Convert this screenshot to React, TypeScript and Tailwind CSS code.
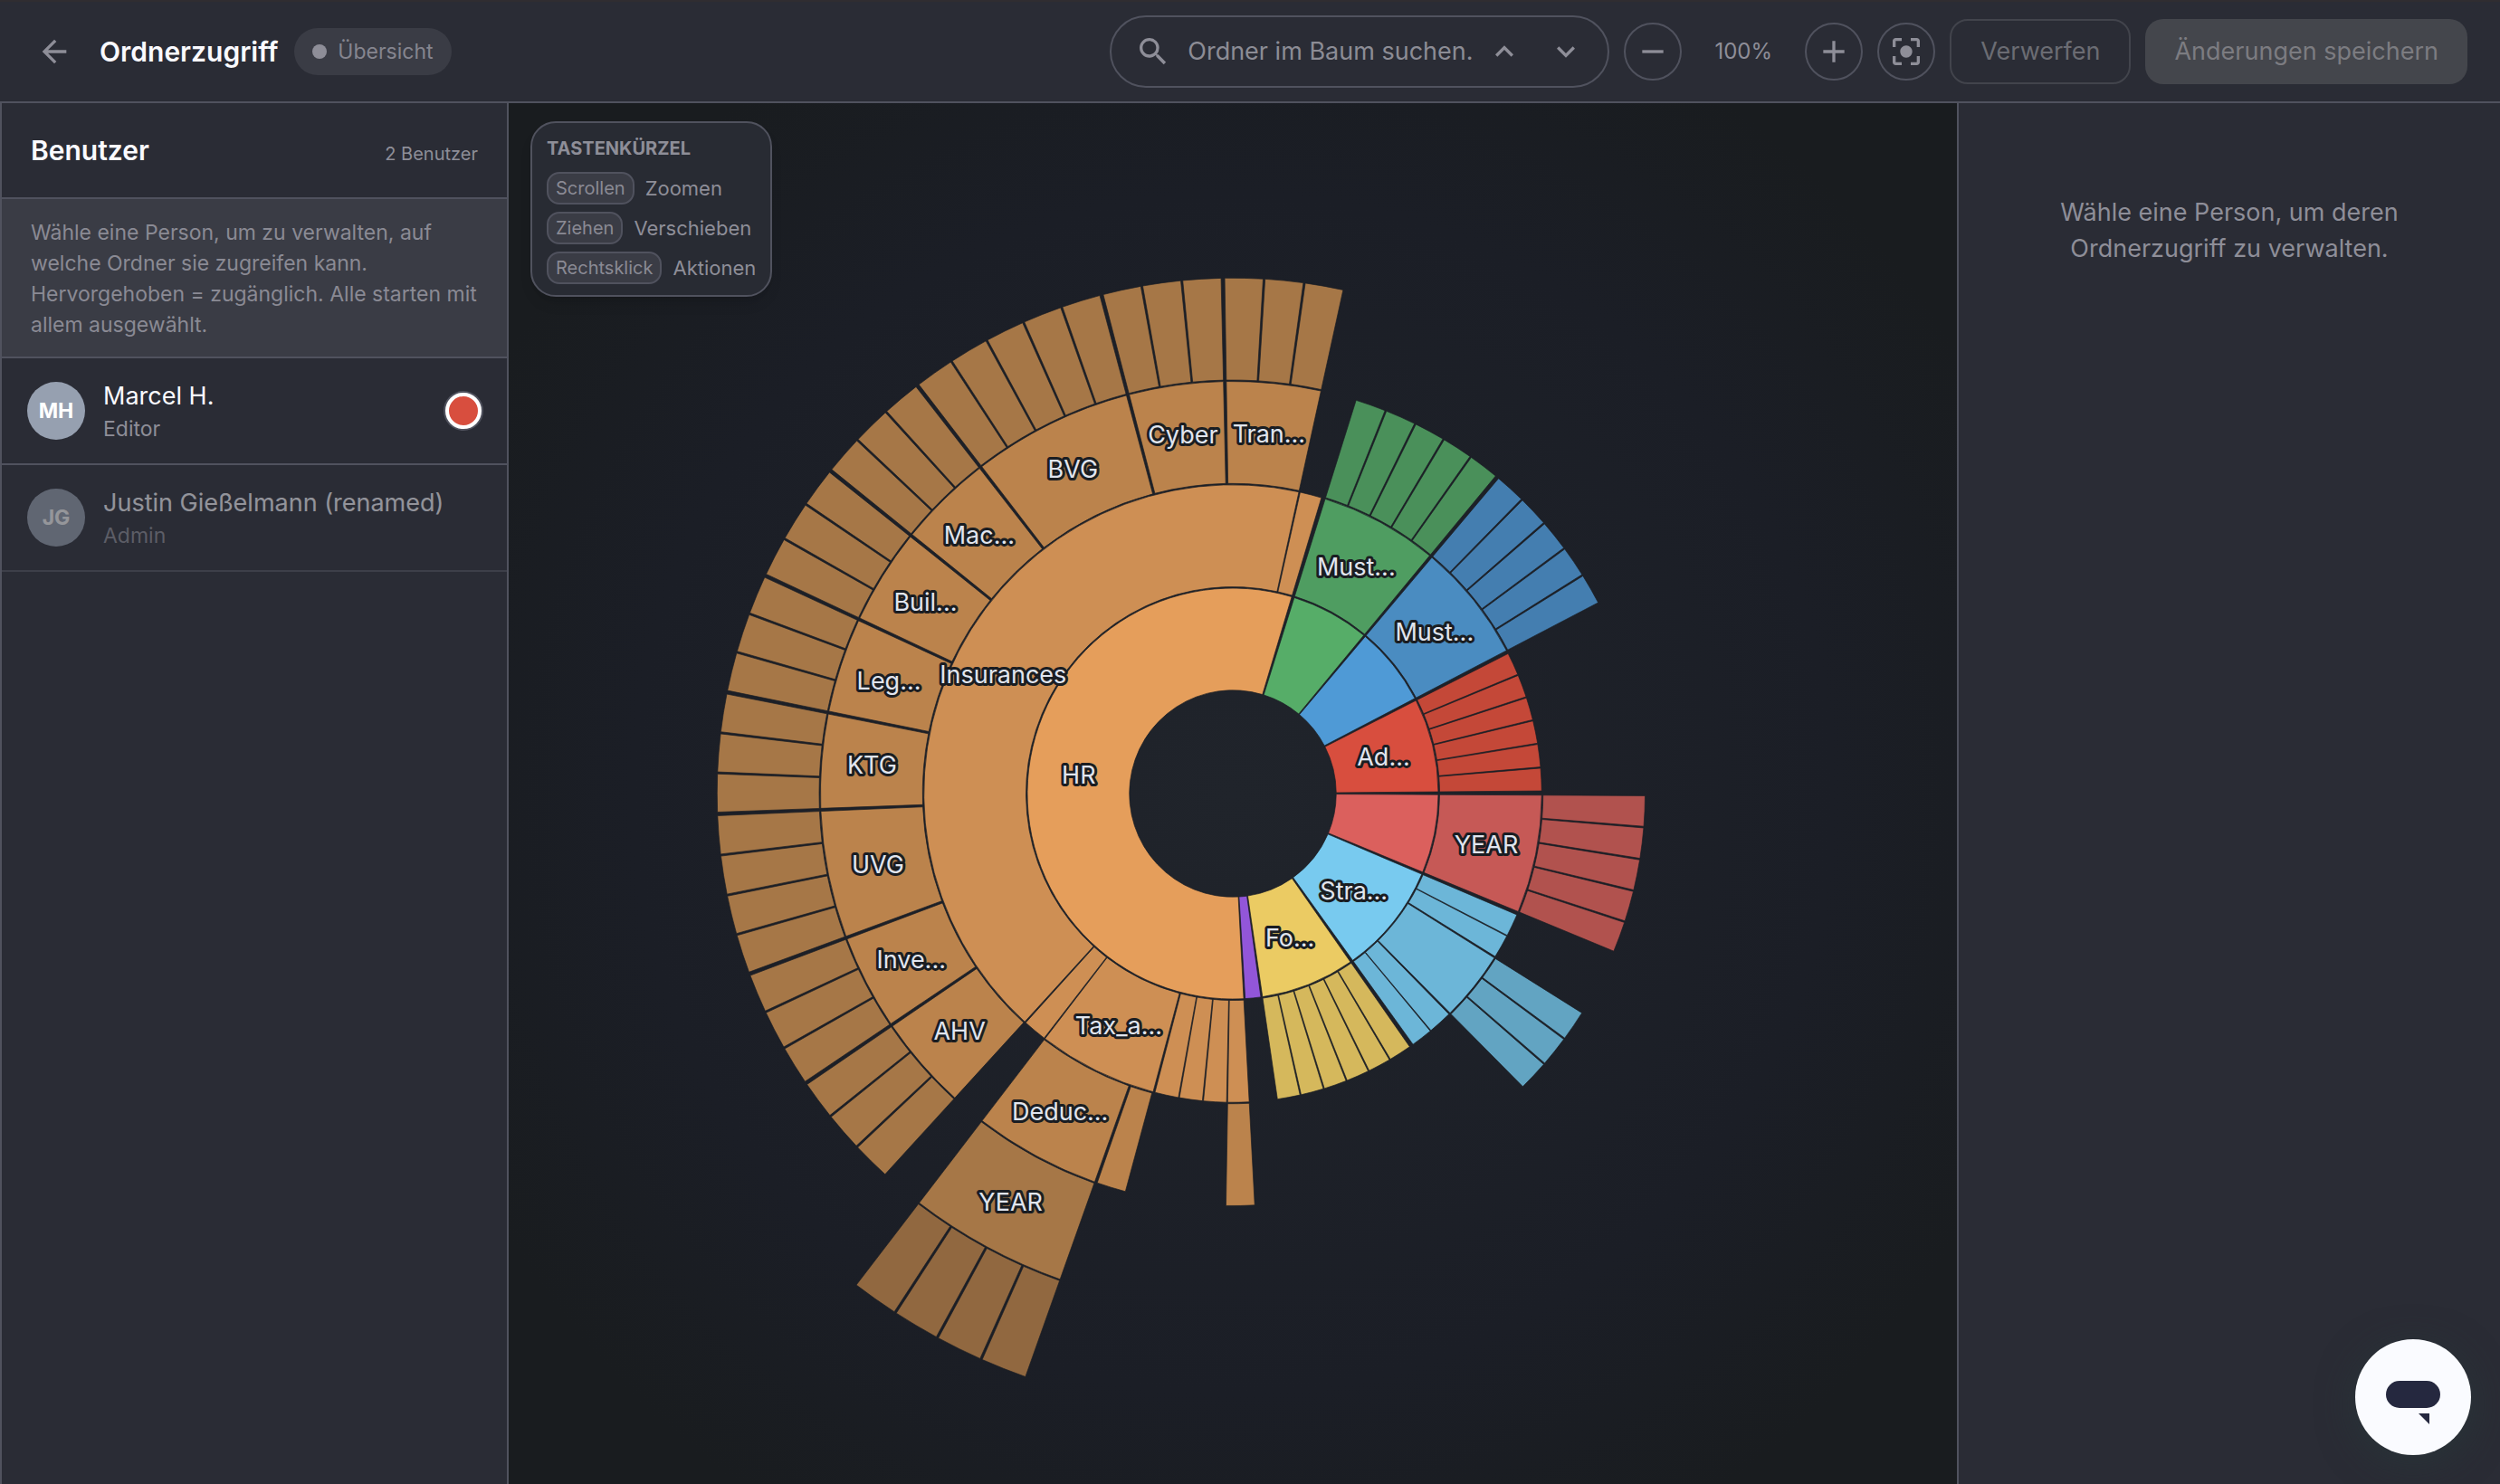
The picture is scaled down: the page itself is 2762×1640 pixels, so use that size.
import {
  MdAdd,
  MdArrowBack,
  MdCenterFocusStrong,
  MdExpandLess,
  MdExpandMore,
  MdRemove,
  MdSearch,
} from 'react-icons/md';

type Segment = {
  from: number;
  to: number;
  label?: string;
  /** Number of equal, unlabelled children. */
  leaves?: number;
  children?: Segment[];
};

type Branch = { shades: string[]; root: Segment };

const RING = 114.25;
const RING_GAP = 1.5;
const LEAF_GAP = 0.22;

// Angles are in degrees, clockwise from twelve o'clock.
const branches: Branch[] = [
  {
    shades: ['#56ad68', '#4f9d61', '#4a905a'],
    root: { from: 17.4, to: 39.6, children: [{ from: 17.4, to: 39.6, label: 'Must...', leaves: 5 }] },
  },
  {
    shades: ['#4f9ad6', '#4a8cc1', '#447eb0'],
    root: { from: 40.13, to: 62.4, children: [{ from: 40.13, to: 62.4, label: 'Must...', leaves: 5 }] },
  },
  {
    shades: ['#d84e3e', '#c44838'],
    root: { from: 63.05, to: 89.5, label: 'Ad...', leaves: 6 },
  },
  {
    shades: ['#db605d', '#c65956', '#b1524e'],
    root: { from: 90.3, to: 112.48, children: [{ from: 90.3, to: 112.48, label: 'YEAR', leaves: 5 }] },
  },
  {
    shades: ['#78caef', '#6cb6d8', '#62a4c2'],
    root: {
      from: 113.11,
      to: 144.31,
      label: 'Stra...',
      children: [
        { from: 113.11, to: 117.33 },
        { from: 117.5, to: 121.85 },
        { from: 122.15, to: 135.3, leaves: 3 },
        { from: 135.6, to: 140.1 },
        { from: 140.26, to: 144.31 },
      ],
    },
  },
  {
    shades: ['#ebcb63', '#d5b85c'],
    root: { from: 145.07, to: 171.69, label: 'Fo...', leaves: 6 },
  },
  {
    shades: ['#9256d9'],
    root: { from: 172.16, to: 176.54 },
  },
  {
    shades: ['#e59e5b', '#ce8f54', '#bb834c', '#a67747', '#916840'],
    root: {
      from: 176.95,
      to: 376.67,
      label: 'HR',
      children: [
        { from: 176.95, to: 180.95, leaves: 1 },
        { from: 181.15, to: 185.45 },
        { from: 185.65, to: 189.95 },
        { from: 190.15, to: 194.6 },
        {
          from: 194.95,
          to: 217.45,
          label: 'Tax_a...',
          children: [
            { from: 195.1, to: 199.2 },
            { from: 199.57, to: 217.45, label: 'Deduc...', children: [{ from: 199.57, to: 217.45, label: 'YEAR', leaves: 4 }] },
          ],
        },
        { from: 217.65, to: 222.1 },
        {
          from: 222.35,
          to: 372.35,
          label: 'Insurances',
          children: [
            { from: 222.4, to: 235.65, label: 'AHV', leaves: 3 },
            { from: 236.05, to: 249.34, label: 'Inve...', leaves: 3 },
            { from: 249.74, to: 267.54, label: 'UVG', leaves: 4 },
            { from: 267.94, to: 281.13, label: 'KTG', leaves: 3 },
            { from: 281.53, to: 294.8, label: 'Leg...', leaves: 3 },
            { from: 295.2, to: 308.55, label: 'Buil...', leaves: 3 },
            { from: 308.95, to: 322.1, label: 'Mac...', leaves: 3 },
            { from: 322.5, to: 345.05, label: 'BVG', leaves: 5 },
            { from: 345.45, to: 358.7, label: 'Cyber', leaves: 3 },
            { from: 359.1, to: 372.35, label: 'Tran...', leaves: 3 },
          ],
        },
        { from: 372.6, to: 376.67 },
      ],
    },
  },
];

function point(angle: number, radius: number): [number, number] {
  const a = (angle * Math.PI) / 180;
  return [Math.sin(a) * radius, -Math.cos(a) * radius];
}

function arcPath(from: number, to: number, inner: number, outer: number): string {
  const large = to - from > 180 ? 1 : 0;
  const [ax, ay] = point(from, outer);
  const [bx, by] = point(to, outer);
  const [cx, cy] = point(to, inner);
  const [dx, dy] = point(from, inner);
  return `M${ax} ${ay}A${outer} ${outer} 0 ${large} 1 ${bx} ${by}L${cx} ${cy}A${inner} ${inner} 0 ${large} 0 ${dx} ${dy}Z`;
}

function splitEvenly(seg: Segment): Segment[] {
  const n = seg.leaves ?? 0;
  const width = (seg.to - seg.from - LEAF_GAP * (n - 1)) / n;
  return Array.from({ length: n }, (_, i) => {
    const from = seg.from + i * (width + LEAF_GAP);
    return { from, to: from + width };
  });
}

type Cell = { d: string; fill: string; label?: string; x: number; y: number };

function flatten(seg: Segment, shades: string[], depth = 0): Cell[] {
  const inner = RING * (depth + 1);
  const outer = inner + RING - RING_GAP;
  const [x, y] = point((seg.from + seg.to) / 2, inner + RING / 2);
  const children = seg.children ?? (seg.leaves ? splitEvenly(seg) : []);
  return [
    { d: arcPath(seg.from, seg.to, inner, outer), fill: shades[depth], label: seg.label, x, y },
    ...children.flatMap((child) => flatten(child, shades, depth + 1)),
  ];
}

const cells = branches.flatMap((b) => flatten(b.root, b.shades));

function Sunburst() {
  return (
    <svg viewBox="-800 -763 1600 1526" className="h-full w-full" role="img" aria-label="Ordnerbaum">
      <g stroke="#1b1e24" strokeWidth={0.7}>
        {cells.map((c, i) => (
          <path key={i} d={c.d} fill={c.fill} />
        ))}
      </g>
      <g
        className="text-[27px] font-normal"
        fill="#e1e5ee"
        stroke="#1a1d22"
        strokeWidth={6}
        strokeLinejoin="round"
        paintOrder="stroke"
        textAnchor="middle"
        dominantBaseline="central"
      >
        {cells
          .filter((c) => c.label)
          .map((c, i) => (
            <text key={i} x={c.x} y={c.y}>
              {c.label}
            </text>
          ))}
      </g>
    </svg>
  );
}

const roundButton =
  'flex size-16 shrink-0 items-center justify-center rounded-full border-2 border-[#50525e] text-[#8e8e98]';

function Header() {
  return (
    <header className="flex h-[114px] shrink-0 items-center justify-between border-t-2 border-b-2 border-t-[#302d31] border-b-[#50525e] bg-[#2a2c35] pr-9 pl-10">
      <div className="flex items-center">
        <button aria-label="Zurück" className="mr-[30px] text-[#8e8e98]">
          <MdArrowBack size={40} />
        </button>
        <h1 className="mr-[18px] text-[30px] font-semibold text-[#fafaff]">Ordnerzugriff</h1>
        <span className="flex h-[52px] items-center gap-3 rounded-full bg-[#3a3c45] px-5 text-[23px] text-[#85858f]">
          <span className="size-4 rounded-full bg-[#8e8e98]" />
          Übersicht
        </span>
      </div>
      <div className="flex items-center gap-4">
        <div className="flex h-20 w-[552px] items-center rounded-[40px] border-2 border-[#50525e] pr-4 pl-[26px] text-[#8e8e98]">
          <MdSearch size={40} className="shrink-0" />
          <input
            type="text"
            aria-label="Ordner im Baum suchen"
            placeholder="Ordner im Baum suchen."
            className="ml-[18px] min-w-0 flex-1 bg-transparent text-[27px] outline-none placeholder:text-[#8c8c95]"
          />
          <button aria-label="Vorheriger Treffer" className="mr-2 flex w-15 justify-center">
            <MdExpandLess size={40} />
          </button>
          <button aria-label="Nächster Treffer" className="flex w-15 justify-center">
            <MdExpandMore size={40} />
          </button>
        </div>
        <button aria-label="Verkleinern" className={roundButton}>
          <MdRemove size={40} />
        </button>
        <span className="w-26 text-center text-2xl text-[#8e8e98]">100%</span>
        <button aria-label="Vergrößern" className={roundButton}>
          <MdAdd size={40} />
        </button>
        <button aria-label="Zentrieren" className={roundButton}>
          <MdCenterFocusStrong size={40} />
        </button>
        <button disabled className="h-18 rounded-[20px] border-2 border-[#42444c] px-8 text-[27px] text-[#6b6c73]">
          Verwerfen
        </button>
        <button disabled className="h-18 rounded-[20px] bg-[#44464c] px-8 text-[27px] text-[#7c7c81]">
          Änderungen speichern
        </button>
      </div>
    </header>
  );
}

const users = [
  { initials: 'MH', name: 'Marcel H.', role: 'Editor', editable: true },
  { initials: 'JG', name: 'Justin Gießelmann (renamed)', role: 'Admin', editable: false },
];

function UserPanel() {
  return (
    <aside className="w-[562px] shrink-0 border-r-2 border-l-2 border-[#50525e] bg-[#2a2c35]">
      <div className="flex h-[106px] items-center justify-between border-b-2 border-[#50525e] px-8">
        <h2 className="text-[30px] font-semibold text-[#fafaff]">Benutzer</h2>
        <span className="pt-2 text-xl text-[#8e8e98]">2 Benutzer</span>
      </div>
      <p className="border-b-2 border-[#50525e] bg-[#3a3c45] px-8 pt-5 pb-[18px] text-[23px] leading-[34px] text-[#8a8a94]">
        Wähle eine Person, um zu verwalten, auf welche Ordner sie zugreifen kann. Hervorgehoben = zugänglich. Alle starten
        mit allem ausgewählt.
      </p>
      <ul>
        {users.map((u) => (
          <li
            key={u.initials}
            className={
              u.editable
                ? 'flex h-[118px] items-center border-b-2 border-[#50525e] px-7'
                : 'flex h-[118px] items-center border-b-2 border-[#50525e] px-7 opacity-50'
            }
          >
            <button className="flex flex-1 items-center gap-5 text-left">
              <span className="flex size-16 items-center justify-center rounded-full bg-[#96a0b0] text-[23px] font-bold text-white">
                {u.initials}
              </span>
              <span className="flex flex-col pt-1">
                <span className="text-[27px] leading-9 text-[#fafaff]">{u.name}</span>
                <span className="text-[23px] leading-9 text-[#8e8e98]">{u.role}</span>
              </span>
            </button>
            {u.editable && (
              <button
                aria-label={`Farbe von ${u.name}`}
                className="size-10 rounded-full border-4 border-white bg-[#d84e3e] ring-2 ring-[#50525e]"
              />
            )}
          </li>
        ))}
      </ul>
    </aside>
  );
}

const shortcuts = [
  { keys: 'Scrollen', action: 'Zoomen' },
  { keys: 'Ziehen', action: 'Verschieben' },
  { keys: 'Rechtsklick', action: 'Aktionen' },
];

function Shortcuts() {
  return (
    <div className="absolute top-5 left-6 flex flex-col gap-2 rounded-[28px] border-2 border-[#50525e] bg-[#282b33] px-4 pt-[14px] pb-3 text-[#8e8e98] shadow-lg">
      <h3 className="mb-1 text-xl leading-7 font-bold">TASTENKÜRZEL</h3>
      {shortcuts.map((s) => (
        <div key={s.keys} className="flex h-9 items-center gap-3 text-[22px]">
          <kbd className="flex h-9 items-center rounded-[14px] border-2 border-[#50525e] bg-[#3a3c45] px-2 font-[Inter,sans-serif] text-xl text-[#8a8a94]">
            {s.keys}
          </kbd>
          {s.action}
        </div>
      ))}
    </div>
  );
}

export default function App() {
  return (
    <div className="flex h-screen flex-col bg-[#2a2c35] font-[Inter,sans-serif]">
      <Header />
      <div className="flex min-h-0 flex-1">
        <UserPanel />
        <main className="relative min-w-0 flex-1 bg-[radial-gradient(circle,#20242b_0%,#1b1e26_60%,#191c1f_85%)]">
          <Sunburst />
          <Shortcuts />
        </main>
        <aside className="w-[600px] shrink-0 border-l-2 border-[#50525e] bg-[#2a2c35] px-24 pt-[101px]">
          <p className="text-center text-[27px] leading-10 text-[#8e8e98]">
            Wähle eine Person, um deren Ordnerzugriff zu verwalten.
          </p>
        </aside>
      </div>
      <button
        aria-label="Chat öffnen"
        className="fixed right-8 bottom-8 flex size-32 items-center justify-center rounded-full bg-[#fafbff] shadow-[0_8px_40px_rgba(40,60,60,0.5)]"
      >
        <svg viewBox="0 0 128 128" className="size-32" fill="#25283f">
          <rect x="34" y="46" width="60" height="30" rx="15" />
          <path d="M70 82h12v12z" />
        </svg>
      </button>
    </div>
  );
}
